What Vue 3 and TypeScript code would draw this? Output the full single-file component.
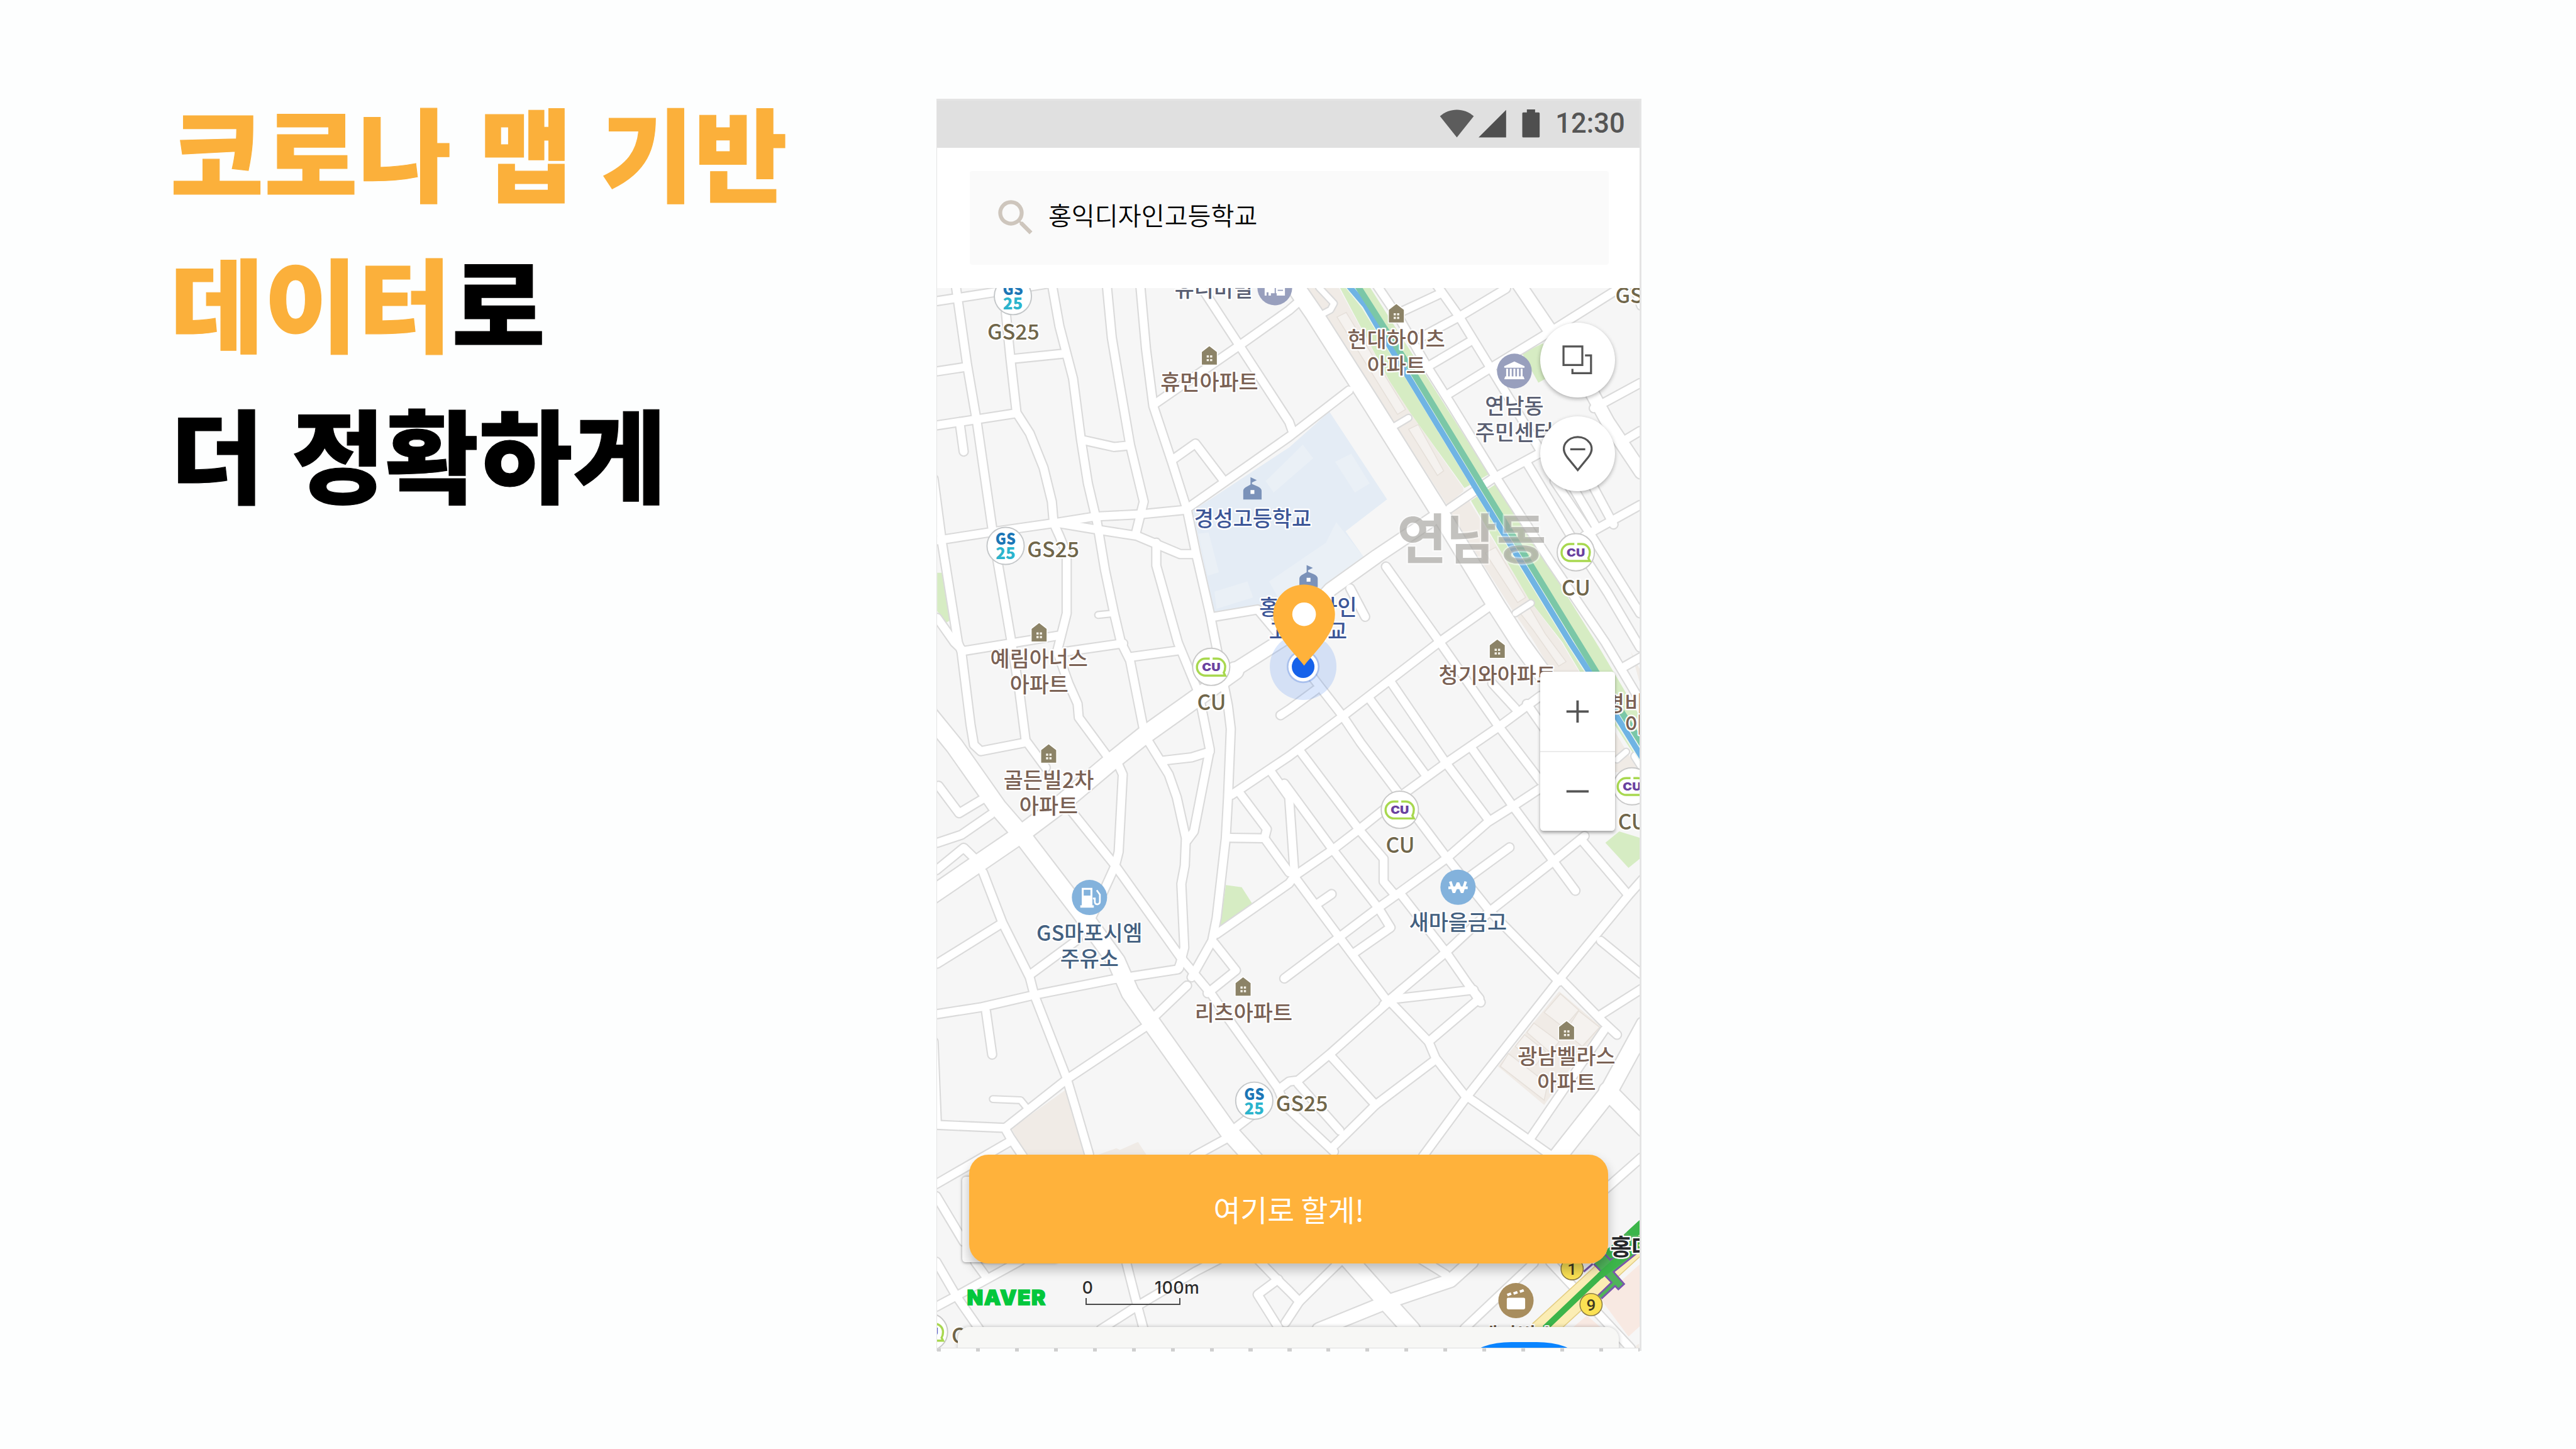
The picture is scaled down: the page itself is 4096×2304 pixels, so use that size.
<script setup lang="ts">
type Road = { d: string; w: number }
type Label = { x: number; y: number; t: string; c: string; size?: number; weight?: number; anchor?: string }

// The map is surveyed in tiles: origin x, origin y, units per pixel on each axis.
const tiles: Record<string, [number, number, number, number]> = {
  A: [1930, 590, 2.1189, 2.1189],
  B: [2660, 590, 2.0907, 2.1189],
  C: [1930, 1320, 2.1189, 2.1189],
  D: [2660, 1320, 2.0907, 2.1189],
  E: [1930, 2050, 2.1189, 2.0632],
  F: [2660, 2050, 2.0907, 2.0632],
  G: [3180, 2500, 3, 3],
}

function at(tile: string, x: number, y: number): [number, number] {
  const [ox, oy, sx, sy] = tiles[tile]
  return [+(ox + x / sx).toFixed(1), +(oy + y / sy).toFixed(1)]
}

function pts(src: string): string {
  let tile = 'A'
  const out: string[] = []
  for (const token of src.trim().split(/\s+/)) {
    if (tiles[token]) {
      tile = token
      continue
    }
    const [x, y] = token.split(',').map(Number)
    out.push(at(tile, x, y).join(','))
  }
  return out.join(' ')
}

const roadSource: Record<number, string[]> = {
  24: [
    'A 730,1447 800,1440',
    'B 150,10 215,80 200,108 150,135',
    'B 475,620 538,582',
    'B 1000,1440 1068,1395',
    'D 1440,535 1480,500',
    'E 268,465 390,470 415,500',
  ],
  34: [
    'A 24,70 280,30 500,-5',
    'A 105,0 155,350 198,600 266,1070 292,1230 350,1568 C 385,240 412,450 500,570',
    'A 24,378 155,358',
    'A 24,615 190,590 370,562',
    'A 122,600 140,730',
    'A 325,120 345,320 372,560 430,650 490,800 527,950 535,1045 560,1100 592,1180 592,1440 C 550,60 600,200 640,290 645,350 770,520',
    'A 360,323 585,300',
    'A 528,0 560,180 620,410 655,680 685,870 725,1040 760,1250 800,1440 C 830,20 870,100 935,430 1040,600 1075,700 1115,880 1110,1000 1095,1080 1108,1360 1085,1450',
    'A 768,0 790,230 820,410 870,700 930,950 895,1090',
    'A 915,0 940,280 972,530 1055,780 1120,985 1160,1180 1220,1440 C 1245,20 1300,300 1312,400 1300,700 1290,880 1250,1230 1230,1330 1140,1490',
    'A 665,680 800,710 870,703',
    'A 980,520 1350,265 1568,110 B 60,75',
    'A 1190,20 1350,265 1568,600 B 35,640',
    'A 1065,760 1157,695 1275,850',
    'A 1120,980 1568,665 B 280,462',
    'A 24,1120 250,1085 530,1045 720,1015 920,1005 1120,985',
    'A 560,1045 740,1075 900,1100 1090,1180 1150,1180',
    'A 985,1130 985,1230 1080,1568 C 1170,240 1220,490 1150,850 1120,890',
    'A 8,850 45,1130 115,1568 C 130,60 170,380 185,470 215,498 410,460',
    'A 24,1460 100,1568 C 130,50',
    'A 1240,1455 1430,1423 1520,1530',
    'C 130,60 560,-10',
    'C 560,65 840,25',
    'C 870,85 1090,55',
    'C 1010,540 1140,525 1220,500',
    'C 30,650 120,770 220,710',
    'C 24,900 130,865 260,775',
    'C 20,1020 140,922 195,975',
    'C 225,1030 310,1250 430,1490 450,1568 E 590,370 630,500 690,700',
    'C 24,1430 305,1255',
    'C 820,560 838,600 820,940 805,1000 700,1230',
    'C 600,745 805,1000 1090,1400 1230,1568 E 1300,120 1520,420 F 0,490 215,690',
    'C 430,1480 640,1325',
    'E 24,102 220,72 450,20 C 790,1500 1080,1455 1100,1410',
    'C 1315,690 1568,520 D 240,355 670,20 B 885,1412',
    'C 1350,680 1470,840 1460,880',
    'C 1490,590 1568,700 D 45,1050 235,1310 450,1600',
    'C 1310,878 1460,880 1568,1030',
    'C 1530,340 1568,315 D 135,230',
    'C 1250,1300 1568,1078 D 45,1045 210,930 325,840 510,690 700,550 930,390 1110,255',
    'C 1240,1340 1335,1460 1210,1560',
    'B 285,1330 350,1455',
    'B 440,1235 665,1555 D 925,385 1110,630',
    'B 715,980 900,850 1110,735',
    'B 400,0 500,150 620,360 720,520 905,825 1150,1210 1390,1568 D 1560,310',
    'B 500,120 680,35',
    'B 580,235 755,140 960,15',
    'B 660,0 755,135 885,350 1000,540 1105,720',
    'B 625,355 800,250',
    'B 715,475 890,365 1150,205 1440,20',
    'B 1340,540 1540,430',
    'B 1450,695 1540,640',
    'B 1050,780 1240,1100 1400,1350 1540,1590',
    'B 1170,860 1330,1100 1540,1440',
    'B 1240,870 1350,1060',
    'B 1330,870 1425,1050',
    'B 1300,1100 1540,965',
    'B 1520,20 1545,90',
    'D 90,130 150,210 250,340 330,460 500,690 700,960 890,1200 1190,1510',
    'D 465,200 700,550 885,800',
    'D 370,270 610,600',
    'D 815,490 990,740 1165,980 1260,1110',
    'D 1050,290 1140,420',
    'D 900,200 1000,310',
    'D 70,500 330,850 430,970 430,1070 480,1130',
    'D 0,640 210,930 410,1190 460,1272 300,1385',
    'D 0,1495 230,1320 400,1190 490,1125 700,970 880,810 990,740 1110,660',
    'D 140,1170 205,1125',
    'D 500,1120 700,1380 850,1600',
    'D 430,1610 700,1380 890,1200 1160,985 1300,870',
    'D 800,1050 975,920',
    'D 1285,885 1490,1130',
    'D 1560,1050 1490,1130 1190,1500 F 790,455 600,710',
    'D 1370,1330 1545,1475',
    'D 1200,1500 F 1380,135 1440,190',
    'D 1475,125 1545,85',
    'D 1520,520 1545,560',
    'E 238,90 265,275',
    'E 320,590 600,375 940,155',
    'E 980,110 1120,-20',
    'E 20,575 320,588 345,630 400,710',
    'E 20,828 345,645',
    'E 8,220 22,560',
    'E 20,880 140,1075',
    'E 20,1160 110,1310 210,1450',
    'E 20,1352 120,1300 250,1230 390,1155',
    'E 190,1160 235,1220',
    'E 850,1150 900,1340 930,1450',
    'E 740,1450 900,1350 1160,1200 1260,1150',
    'E 1430,1150 1510,1230 1568,1285 F 65,1330',
    'E 1520,1235 1430,1300 1520,1440',
    'E 1150,710 1290,635',
    'E 1330,590 1430,515',
    'E 1520,425 1568,390 F 60,385 200,270 440,60 510,-5',
    'F 200,280 395,490',
    'F 60,400 240,600',
    'F 210,670 395,490 650,300',
    'D 820,1545 F 450,40 625,220 655,290 790,460',
    'F 625,220 845,35 800,-20',
    'F 800,460 1060,640 1160,710',
    'F 1370,105 1545,-5',
    'F 1060,640 1385,170',
    'F 1390,850 1545,715',
    'F 240,1160 65,1330 5,1420',
    'F 780,1445 1080,1165',
    'F 1150,1160 1500,1530',
    'F 560,1130 700,1215',
  ],
  56: [
    'C 1300,160 1568,-10 B 200,1335 400,1190 665,1010',
    'B 1330,470 1400,600 1545,820',
    'B 1018,0 1145,190',
    'F 150,1450 450,1330 720,1240 810,1160',
  ],
  74: [
    'C -10,340 100,475 290,745 390,860 650,1200 810,1420 E 870,10 950,120 1300,600 1430,740',
    'C 0,1130 380,870 560,735 780,550 930,430 1330,145',
    'B 30,-20 125,120 380,525 665,985 920,1410 1020,1568 D 1120,160',
    'F 1160,740 1400,440 1560,150',
    'F 1400,430 1560,590',
    'F 260,1130 440,1330 550,1450',
  ],
}

const roads: Road[] = Object.entries(roadSource).flatMap(([w, list]) =>
  list.map((d) => ({ d: pts(d), w: Number(w) / 2.11 })),
)

const APT = '#7a6154'
const SHOP = '#70664a'
const SCHOOL = '#3c5697'
const BANK = '#436080'
const OFFICE = '#5a5f72'

function label(tile: string, x: number, y: number, t: string, c: string, extra: Partial<Label> = {}): Label {
  const [gx, gy] = at(tile, x, y)
  return { x: gx, y: gy, t, c, ...extra }
}

const labels: Label[] = [
  label('A', 358, 238, 'GS25', SHOP),
  label('A', 533, 1194, 'GS25', SHOP),
  label('A', 1237, 52, '유니비빌', OFFICE),
  label('A', 1218, 459, '휴먼아파트', APT),
  label('A', 1408, 1058, '경성고등학교', SCHOOL),
  label('B', 485, 273, '현대하이츠', APT),
  label('B', 485, 387, '아파트', APT),
  label('B', 996, 566, '연남동', OFFICE),
  label('B', 996, 680, '주민센터', OFFICE),
  label('B', 1263, 1362, 'CU', SHOP),
  label('B', 1433, 78, 'GS25', SHOP, { anchor: 'start' }),
  label('B', 103, 1447, '홍익디자인', SCHOOL),
  label('B', 103, 1552, '고등학교', SCHOOL),
  label('C', 471, 126, '예림아너스', APT),
  label('C', 471, 240, '아파트', APT),
  label('C', 1228, 317, 'CU', SHOP),
  label('C', 513, 660, '골든빌2차', APT),
  label('C', 513, 774, '아파트', APT),
  label('C', 692, 1329, 'GS마포시엠', BANK),
  label('C', 692, 1442, '주유소', BANK),
  label('D', 922, 200, '청기와아파트', APT),
  label('D', 502, 943, 'CU', SHOP),
  label('D', 752, 1284, '새마을금고', BANK),
  label('D', 1388, 322, '명비', APT, { anchor: 'start' }),
  label('D', 1475, 417, '아파트', APT, { anchor: 'start' }),
  label('D', 1507, 842, 'CU', SHOP),
  label('E', 1368, 130, '리츠아파트', APT),
  label('E', 1624, 518, 'GS25', SHOP),
  label('F', 1222, 317, '광남벨라스', APT),
  label('F', 1222, 428, '아파트', APT),
  label('E', 87, 1508, 'CU', SHOP, { anchor: 'start' }),
  label('F', 1010, 1508, '메가박스', '#5e4a33'),
  label('G', 465, 298, '홍대입구', '#26282b', { anchor: 'start', size: 48, weight: 700 }),
]

const houses = [
  at('A', 1218, 268), at('B', 485, 83), at('A', 471, 1483), at('C', 513, 468),
  at('D', 922, 8), at('C', 1366, 1490), at('F', 1222, 132),
]
const schools = [at('A', 1407, 843), at('B', 105, 1228)]
const gsMarks = [at('A', 356, 48), at('A', 324, 1144), at('E', 1415, 472)]
const cuMarks = [at('B', 1262, 1172), at('C', 1226, 128), at('D', 500, 755), at('D', 1505, 652), at('E', -12, 1460)]
const town = at('B', 811, 1203)
const universal = at('A', 1505, 12)
const civic = at('B', 996, 377)
const fuel = at('C', 692, 1140)
const bank = at('D', 752, 1095)
const movie = at('F', 1003, 1326)
const exit1 = at('F', 1246, 1190)
const exit9 = at('F', 1328, 1343)
const tr = (p: number[]) => `translate(${p[0]} ${p[1]})`

const beige = [
  'B 95,10 235,10 455,420 545,560 775,890 775,905 705,965 480,610 180,145',
  'B 720,1000 800,945 1060,1380 1200,1568 D 1536,590 1420,590 1070,0 B 990,1430',
  'E 350,590 588,425 670,712 415,712',
  'E 715,708 810,675 825,682 905,648 945,708',
  'F 1190,5 1370,155 1125,490 925,325',
  'F 1536,1510 1505,1530 1536,1560',
  'D 1500,60 1545,150 1545,220',
]
const blocks = [
  'B 228,140 268,120 525,545 490,567',
  'B 538,632 580,612 690,815 663,835',
  'B 870,1175 915,1150 1045,1370 1010,1393',
  'B 1022,1440 1065,1418 1130,1530 D 1220,105 1188,125 1080,-30',
  'F 1195,15 1275,85 1210,160 1125,95',
  'F 1275,88 1365,158 1290,240 1215,180',
  'F 1080,140 1190,220 1150,265 1050,180',
  'F 1040,190 1130,260 1090,320 1000,240',
  'F 970,270 1140,400 1125,470 935,325',
]
const greens = [
  'A 24,1262 48,1262 80,1470 65,1480 24,1430',
  'B 235,0 365,0 885,830 780,890 545,560 455,420',
  'B 808,945 920,870 1350,1568 D 1545,355 1545,560 1280,150 B 1205,1568 1060,1380',
  'B 1030,300 1120,255 1150,400 1100,428',
  'C 1290,1085 1360,1095 1405,1165 1265,1268',
  'D 1390,900 1450,850 1545,880 1545,965 1490,1010',
]
const campus = 'A 1568,712 1145,990 1240,1440 1430,1405 1500,1480 B 180,1320 345,1195 265,1080 445,940 195,555'
const campusBlocks = [
  'A 1170,1090 1215,1085 1260,1260 1210,1275',
  'A 1240,1345 1385,1300 1410,1370 1250,1420',
  'A 1465,860 B 80,700 125,760 A 1500,910',
  'B 220,775 290,740 370,870 305,910',
  'A 1480,1300 B 180,1130 225,1040 345,1195 180,1320 A 1530,1390',
]
</script>

<template>
  <main class="page">
    <h1 class="headline">
      <span class="accent">코로나 맵 기반</span><br />
      <span class="accent">데이터</span>로<br />
      더 정확하게
    </h1>

    <section class="phone">
      <header class="status">
        <svg class="status-icons" viewBox="2975 220 220 66">
          <path d="M3016 282 L2981 238 C3001 220 3031 220 3051 238Z" fill="#5c5c5c" />
          <path d="M3061 282 L3118 225 V282Z" fill="#4f4f4f" />
          <path d="M3161 224h17v6h7.500a2 2 0 0 1 2 2v48a2 2 0 0 1 -2 2h-32a2 2 0 0 1 -2 -2v-48a2 2 0 0 1 2 -2h7.500z" fill="#4f4f4f" />
        </svg>
        <span class="clock">12:30</span>
      </header>

      <div class="search-area">
        <div class="search">
          <svg class="glass" viewBox="0 0 24 24">
            <path fill="#cec6bd" d="M15.500 14h-.79l-.28-.27A6.471 6.471 0 0 0 16 9.500 6.500 6.500 0 1 0 9.500 16c1.610 0 3.090-.59 4.230-1.570l.27.28v.79l5 4.990L20.490 19l-4.990-5zm-6 0C7.010 14 5 11.990 5 9.500S7.010 5 9.500 5 14 7.010 14 9.500 11.990 14 9.500 14z" />
          </svg>
          <span>홍익디자인고등학교</span>
        </div>
      </div>

      <div class="map">
        <svg class="canvas" viewBox="1941 596 1454 2195" preserveAspectRatio="none">
          <rect x="1941" y="596" width="1454" height="2195" fill="#f6f6f6" />
          <polygon :points="pts(campus)" fill="#e4ecf5" />
          <polygon v-for="p in campusBlocks" :key="p" :points="pts(p)" fill="#eaf0f6" />
          <polygon v-for="p in beige" :key="p" :points="pts(p)" fill="#f0ebe6" />
          <polygon v-for="p in blocks" :key="p" :points="pts(p)" fill="#f5f2ef" stroke="#e6e0da" stroke-width="2" />
          <polygon v-for="p in greens" :key="p" :points="pts(p)" fill="#d6ecc3" />
          <polygon :points="pts('F 1545,1165 1370,1320 1490,1480 1545,1430')" fill="#f8e9e2" />
          <polygon :points="pts('F 1310,1390 1370,1440 1250,1440')" fill="#f8e9e2" />

          <g fill="none" stroke-linejoin="round" stroke-linecap="round">
            <polyline v-for="r in roads" :key="'c' + r.d" :points="r.d" stroke="#dadada" :stroke-width="r.w + 5.5" />
            <polyline v-for="r in roads" :key="'f' + r.d" :points="r.d" stroke="#fff" :stroke-width="r.w" />
            <polyline :points="pts('B 275,-5 350,90 405,180 540,400 840,900 1000,1170 1240,1568 D 1320,150 1560,545')" stroke="#eef6ee" stroke-width="17" />
            <polyline :points="pts('B 272,-5 350,88 403,180 535,400 835,900 998,1170 1238,1568 D 1320,150 1560,545')" stroke="#6fb4e4" stroke-width="12" />
            <polyline :points="pts('B 312,-5 428,180 568,400 868,900 1038,1180 1272,1568 D 1350,150 1560,485')" stroke="#7bc7a7" stroke-width="13" />
          </g>

          <g fill="none">
            <polyline :points="pts('G 30,775 680,178')" stroke="#e3cd83" stroke-width="50" />
            <polyline :points="pts('G 30,775 680,178')" stroke="#fbedb4" stroke-width="46" />
            <polyline :points="pts('G 300,398 356,350')" stroke="#7a55ac" stroke-width="4" />
            <polygon :points="pts('G 445,262 640,85 640,280 485,400 551,475 515,508 495,487 410,566 390,545 473,465 362,350 435,292')" fill="#4fb35a" />
            <polyline :points="pts('G 640,275 485,400 551,475 515,508 495,487 410,566')" stroke="#7a55ac" stroke-width="3.500" />
            <polyline :points="pts('G 390,545 473,465 362,350')" stroke="#7a55ac" stroke-width="3.500" />
            <polyline :points="pts('G 433,292 465,325 490,305')" stroke="#7a55ac" stroke-width="3.500" />
            <polyline :points="pts('G 58,750 420,405 660,188')" stroke="#3cb54a" stroke-width="13" />
            <polyline :points="pts('G 400,425 640,235')" stroke="#3cb54a" stroke-width="14" />
            <polygon :points="pts('G 450,255 500,215 520,290 470,318 440,285')" fill="#3cb54a" />
            <polygon :points="pts('G 450,240 570,135 660,240 620,290 560,200')" fill="#f6f6f6" fill-opacity="0" />
            <polygon :points="pts('G 470,195 570,150 590,172 600,300 480,300')" fill="none" />
            <polygon :points="pts('G 650,75 567,152 586,172 650,170')" fill="#3cb54a" />
          </g>

          <text class="town" :x="town[0]" :y="town[1]">연남동</text>

          <g v-for="(p, i) in houses" :key="'h' + i" :transform="tr(p)">
            <path d="M0 0 L15.500 12 V38 H-15.500 V12Z" fill="#8c8367" stroke="#fff" stroke-width="4" paint-order="stroke" />
            <path d="M-5.500 19h4.500v4.500h-4.500z M1.500 19h4.500v4.500h-4.500z M-5.500 26.500h4.500v4.500h-4.500z M1.500 26.500h4.500v4.500h-4.500z" fill="#f4f1e8" />
          </g>
          <g v-for="(p, i) in schools" :key="'s' + i" :transform="tr(p)">
            <path d="M-4 0 L9 6 L-1 11 V14 L11 19 Q19 23 19 28 V46 H-19 V28 Q-19 23 -11 19 L-4 15Z" fill="#7b92b9" />
            <rect x="-4" y="26.500" width="8" height="8" fill="#fff" />
          </g>

          <text
            v-for="l in labels"
            :key="l.t + l.x + l.y"
            class="label"
            :x="l.x"
            :y="l.y"
            :fill="l.c"
            :font-size="l.size ?? 44"
            :font-weight="l.weight ?? 500"
            :text-anchor="l.anchor ?? 'middle'"
          >{{ l.t }}</text>

          <g v-for="(p, i) in gsMarks" :key="'g' + i" :transform="tr(p)" class="brand">
            <circle r="38.500" fill="#fff" stroke="#c4c7c9" stroke-width="2.500" />
            <text y="-2" fill="#1c76b6" textLength="42" lengthAdjust="spacingAndGlyphs">GS</text>
            <text y="28" fill="#2bb4cd" textLength="41" lengthAdjust="spacingAndGlyphs">25</text>
          </g>
          <g v-for="(p, i) in cuMarks" :key="'u' + i" :transform="tr(p)">
            <circle r="38.500" fill="#fff" stroke="#c9c9c9" stroke-width="2.500" />
            <path d="M-3 -17 H-12 A17 17 0 0 0 -12 18 H29 L26 12 Q29 7 29 0 A17 17 0 0 0 12 -17 H3" fill="none" stroke="#a8d84f" stroke-width="4.500" />
            <text class="cu" y="8.500" textLength="38" lengthAdjust="spacingAndGlyphs">CU</text>
          </g>

          <g :transform="tr(universal)">
            <circle r="36" fill="#989fbd" />
            <path d="M-21 -10H21V16H4V11H-8V16H-13V9H-17V16H-21Z" fill="#fff" />
            <path d="M1 -10V13M6 -2H17M6 5H17" stroke="#989fbd" stroke-width="2.500" />
          </g>
          <g :transform="tr(civic)">
            <circle r="36" fill="#989fbd" />
            <path d="M0 -20 L21 -10 V-7 H-21 V-10Z M-17 -5h4v16h-4z M-9.500 -5h4v16h-4z M-2 -5h4v16h-4z M5.500 -5h4v16h-4z M13 -5h4v16h-4z M-19 11h38l2 6h-42z" fill="#fff" />
          </g>
          <g :transform="tr(fuel)">
            <circle r="36.500" fill="#83b2dc" />
            <path d="M-16 -20H6V16H9V21H-19V16H-16Z" fill="#fff" />
            <rect x="-12" y="-16" width="14" height="12" fill="#83b2dc" />
            <path d="M7 2 H11 V10 Q12 15 17 14 Q22 13 21.500 7 V-6 L15 -15" fill="none" stroke="#fff" stroke-width="3.500" />
          </g>
          <g :transform="tr(bank)">
            <circle r="36.500" fill="#83b2dc" />
            <path d="M-16 -12 L-8.500 11 L0 -9 L8.500 11 L16 -12 M-20 1 H20" fill="none" stroke="#fff" stroke-width="5.500" stroke-linejoin="bevel" />
          </g>
          <g :transform="tr(movie)">
            <circle r="36.500" fill="#a88d5e" />
            <rect x="-19" y="-6" width="38" height="24" rx="3" fill="#fff" />
            <path d="M-19 -14 l8 -3 2 5 -8 3z M-6 -17 l8 -3 2 5 -8 3z M7 -21 l8 -3 2 5 -8 3z" fill="#fff" />
          </g>
          <g v-for="(p, i) in [exit1, exit9]" :key="'e' + i" :transform="tr(p)">
            <circle r="23" fill="#fbe153" stroke="#8b7b45" stroke-width="2" />
            <text class="exit" y="12.500">{{ i ? '9' : '1' }}</text>
          </g>

          <circle cx="2699" cy="1380" r="69" fill="#5b92f0" fill-opacity=".22" />
          <circle cx="2699" cy="1380" r="34" fill="#3a6fd8" fill-opacity=".28" />
          <circle cx="2699" cy="1380" r="30.500" fill="#fff" />
          <circle cx="2699" cy="1380" r="23.500" fill="#1662ea" />
          <path d="M2701 1378 C2680 1350 2637 1313 2637 1272 A64 62 0 0 1 2765 1272 C2765 1313 2722 1350 2701 1378Z" fill="#ffb23b" />
          <circle cx="2701" cy="1271.500" r="24.500" fill="#fff" />
        </svg>

        <button class="round layers">
          <svg viewBox="-40 -40 80 80" fill="none" stroke="#555" stroke-width="4.200">
            <path d="M-29.500 -28.500H9.500V10H-29.500Z M15 -10H27.500V27H-11V18" />
          </svg>
        </button>
        <button class="round places">
          <svg viewBox="-40 -40 80 80" fill="none" stroke="#555" stroke-width="4.200">
            <path d="M0 33.500 L-21 8 C-40 -16 -20 -35 0 -35 C20 -35 40 -16 21 8Z M-15.500 -9.500H15.500" />
          </svg>
        </button>

        <div class="zoom">
          <button><svg viewBox="-24 -24 48 48"><path d="M-23 0H23M0 -23V23" stroke="#555" stroke-width="5" /></svg></button>
          <button><svg viewBox="-24 -24 48 48"><path d="M-23 0H23" stroke="#555" stroke-width="5" /></svg></button>
        </div>

        <div class="tray"></div>
        <button class="confirm">여기로 할게!</button>
        <span class="naver">NAVER</span>
        <div class="scale">
          <div class="scale-text"><span>0</span><span>100m</span></div>
          <div class="scale-bar"></div>
        </div>
        <div class="sheet"><i></i></div>
      </div>
      <div class="ticks"></div>
    </section>
  </main>
</template>

<style>
/* 1rem equals 100 design pixels on the 5334px wide artboard */
html {
  font-size: 1.87477vw;
}
</style>

<style scoped>
.page {
  position: relative;
  display: flex;
  width: 53.34rem;
  height: 100vh;
  overflow: hidden;
  background: #fdfefe;
  font-family: 'Noto Sans CJK KR', sans-serif;
}
.headline {
  box-sizing: border-box;
  width: 19.395rem;
  margin: 0;
  padding: 1.545rem 0 0 3.53rem;
  font-size: 2.1rem;
  line-height: 3.12rem;
  font-weight: 900;
  letter-spacing: 0.01rem;
  word-spacing: 0.075rem;
  -webkit-text-stroke: 0.015rem currentColor;
  color: #000;
  white-space: nowrap;
}
.accent {
  color: #fbb03b;
}
.phone {
  box-sizing: border-box;
  width: 14.6rem;
  height: 25.93rem;
  margin-top: 2.04rem;
  border: solid #e4e4e4;
  border-width: 0.04rem 0.04rem 0 0.02rem;
  background: #fff;
}
.status {
  display: flex;
  align-items: center;
  justify-content: flex-end;
  height: 0.98rem;
  padding-right: 0.31rem;
  background: #e0e0e0;
}
.status-icons {
  width: 2.2rem;
  height: 0.66rem;
  margin: 0 0.25rem 0.02rem 0;
}
.clock {
  font: 500 0.567rem/1 Roboto, sans-serif;
  color: #555;
}
.search-area {
  height: 2.9rem;
  padding: 0.48rem 0.65rem 0 0.67rem;
  box-sizing: border-box;
}
.search {
  display: flex;
  align-items: center;
  height: 1.94rem;
  padding-left: 0.47rem;
  border-radius: 0.05rem;
  background: #fafafa;
  font-size: 0.523rem;
  font-weight: 350;
  line-height: 1;
  color: #000;
}
.glass {
  width: 0.97rem;
  height: 0.97rem;
  margin-right: 0.19rem;
}
.search span {
  margin-top: -0.13rem;
}
.map {
  position: relative;
  height: 21.95rem;
  overflow: hidden;
}
.canvas {
  display: block;
  width: 14.54rem;
  height: 21.95rem;
}
.label {
  font-family: 'Noto Sans CJK KR', sans-serif;
  stroke: #fff;
  stroke-width: 6px;
  stroke-linejoin: round;
  paint-order: stroke;
}
.town {
  font: 700 112px 'Noto Sans CJK KR', sans-serif;
  text-anchor: middle;
  fill: #a3a29c;
  fill-opacity: 0.65;
  stroke: #fff;
  stroke-opacity: 0.45;
  stroke-width: 6px;
  paint-order: stroke;
}
.brand text {
  font: 900 33px 'Noto Sans CJK KR', sans-serif;
  text-anchor: middle;
}
.cu {
  font: 900 23px Inter, sans-serif;
  text-anchor: middle;
  fill: #6a429f;
}
.exit {
  font: 500 34px Roboto, sans-serif;
  text-anchor: middle;
  fill: #3f3a22;
}
button {
  display: flex;
  align-items: center;
  justify-content: center;
  margin: 0;
  padding: 0;
  border: 0;
  background: #fff;
  font-family: inherit;
}
.round {
  position: absolute;
  left: 12.49rem;
  width: 1.55rem;
  height: 1.55rem;
  border-radius: 50%;
  box-shadow: 0 0.03rem 0.08rem rgba(0, 0, 0, 0.3);
}
.round svg {
  width: 0.8rem;
  height: 0.8rem;
}
.layers {
  top: 0.72rem;
}
.places {
  top: 2.66rem;
}
.zoom {
  position: absolute;
  left: 12.485rem;
  top: 7.95rem;
  width: 1.55rem;
  height: 3.3rem;
  border-radius: 0.07rem;
  background: #fff;
  box-shadow: 0 0.03rem 0.07rem rgba(0, 0, 0, 0.35);
}
.zoom button {
  width: 100%;
  height: 1.64rem;
  background: none;
}
.zoom button + button {
  box-sizing: border-box;
  border-top: 0.03rem solid #ebebeb;
}
.zoom svg {
  width: 0.48rem;
  height: 0.48rem;
}
.tray {
  position: absolute;
  left: 0.51rem;
  top: 18.4rem;
  width: 2rem;
  height: 1.78rem;
  border-radius: 0.07rem;
  background: #fafafa;
  box-shadow: 0 0.01rem 0.06rem rgba(0, 0, 0, 0.4);
}
.confirm {
  position: absolute;
  left: 0.665rem;
  top: 17.95rem;
  width: 13.23rem;
  height: 2.256rem;
  border-radius: 0.4rem;
  background: #ffb23b;
  color: #fff;
  font-size: 0.607rem;
  line-height: 1;
  box-shadow: 0 0.12rem 0.24rem rgba(0, 0, 0, 0.24);
}
.naver {
  position: absolute;
  left: 0.615rem;
  top: 20.7rem;
  font: 900 0.435rem/1 Inter, sans-serif;
  letter-spacing: 0.02rem;
  color: #03c73c;
  -webkit-text-stroke: 0.02rem #03c73c;
}
.scale {
  position: absolute;
  left: 3.07rem;
  top: 20.53rem;
  width: 1.96rem;
}
.scale-text {
  display: flex;
  justify-content: space-between;
  margin: 0 -0.4rem 0 -0.07rem;
  font: 500 0.345rem/0.36rem Inter, sans-serif;
  letter-spacing: 0.008rem;
  color: #2a2a2a;
}
.scale-bar {
  height: 0.12rem;
  margin-top: 0.03rem;
  border: 0.035rem solid #4a4a4a;
  border-top: 0;
}
.sheet {
  position: absolute;
  left: 0.42rem;
  top: 21.525rem;
  width: 13.69rem;
  height: 1rem;
  border-radius: 0.24rem;
  background: #f7f7f5;
  box-shadow: 0 0 0.08rem rgba(0, 0, 0, 0.25);
}
.sheet i {
  position: absolute;
  left: 10.67rem;
  top: 0.3rem;
  width: 2.12rem;
  height: 1rem;
  border-radius: 0.8rem / 0.3rem;
  background: #0a84ff;
}
.ticks {
  height: 0.06rem;
  border-top: 0.01rem solid #dedede;
  background: repeating-linear-gradient(90deg, #cfcfcf 0 0.08rem, #fdfefe 0.08rem 0.8065rem);
}
</style>
